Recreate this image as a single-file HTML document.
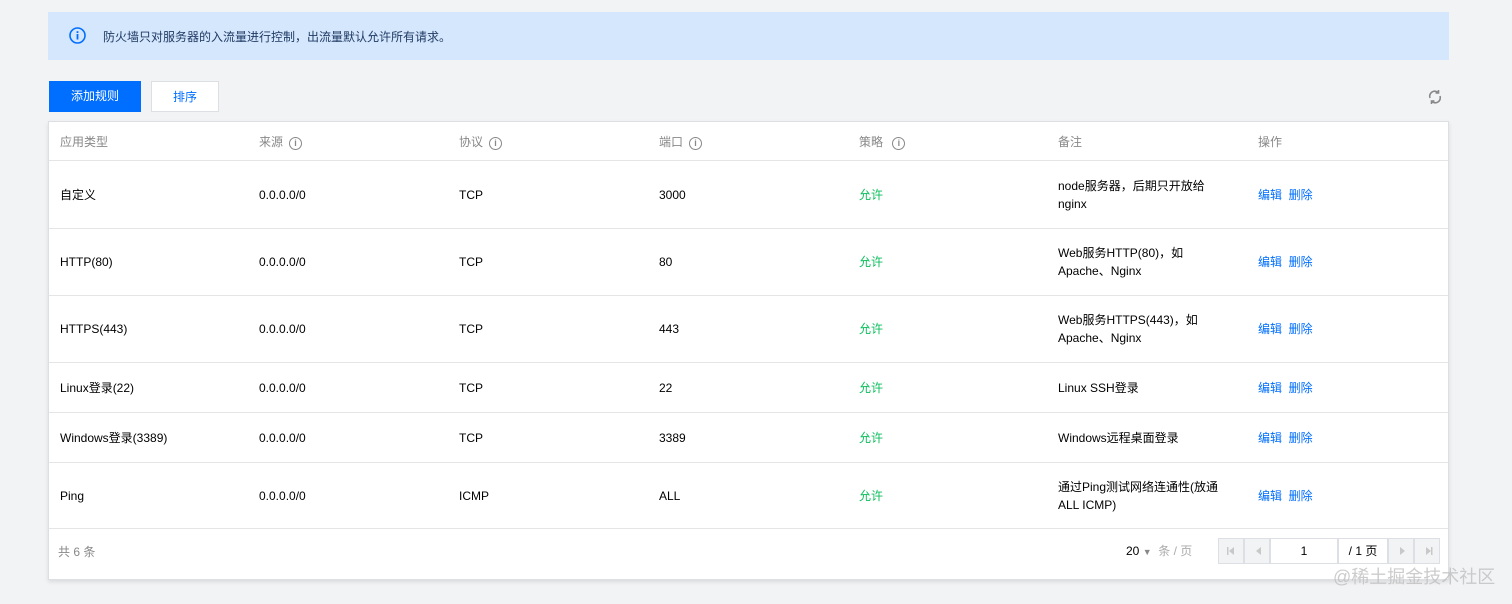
<!DOCTYPE html>
<html><head><meta charset="utf-8"><style>
*{box-sizing:border-box;margin:0;padding:0}
body{width:1512px;height:604px;background:#f2f3f5;font-family:"Liberation Sans","Noto Sans CJK SC",sans-serif;font-size:12px;color:#000;position:relative;overflow:hidden}
.alert{position:absolute;left:48px;top:12px;width:1401px;height:48px;background:#d5e7fd;color:#003b80}
.alert span{position:absolute;left:55px;top:16px;font-size:12px;color:#1f3a63}
.btn{position:absolute;top:81px;height:31px;line-height:31px;text-align:center;font-size:12px}
.tbl{position:absolute;left:48px;top:121px;width:1401px;height:459px;background:#fff;border:1px solid #dcdfe4;box-shadow:0 2px 4px rgba(0,0,0,.1)}
.row{position:absolute;left:0;width:1399px;border-bottom:1px solid #e5e5e5}
.c{position:absolute;line-height:18px}
.hd .c{color:#888}
.g{color:#0abf5b}
.b{color:#006eff}
.qi{display:inline-block;width:13px;height:13px;border:1.3px solid #888;border-radius:50%;font-size:9px;line-height:10px;text-align:center;color:#888;font-weight:bold;vertical-align:0px;margin-left:6px}
.pg{position:absolute;top:538px;height:26px;border:1px solid #dcdfe4;background:#f2f3f5}
</style></head><body>
<div class="alert">
<svg style="position:absolute;left:21px;top:15px" width="17" height="17" viewBox="0 0 17 17"><circle cx="8.5" cy="8.5" r="7.5" fill="none" stroke="#006eff" stroke-width="1.6"/><rect x="7.6" y="7" width="1.8" height="5.5" fill="#006eff"/><rect x="7.6" y="4.2" width="1.8" height="1.8" fill="#006eff"/></svg>
<span>防火墙只对服务器的入流量进行控制，出流量默认允许所有请求。</span></div>
<div class="btn" style="left:49px;width:92px;background:#006eff;color:#fff">添加规则</div>
<div class="btn" style="left:151px;width:68px;background:#fff;border:1px solid #dcdfe4;color:#006eff">排序</div>
<svg style="position:absolute;left:1427px;top:89px" width="16" height="16" viewBox="0 0 16 16" fill="none" stroke="#888" stroke-width="1.6"><path d="M3 9a5 5 0 0 1 8.5-5M13 7a5 5 0 0 1-8.5 5"/><path d="M11.5 1v3h-3M4.5 15v-3h3"/></svg>
<div class="tbl">
<div class="row hd" style="top:0;height:39px">
<div class="c" style="left:11px;top:11px">应用类型</div>
<div class="c" style="left:210px;top:11px">来源<span class="qi">i</span></div>
<div class="c" style="left:410px;top:11px">协议<span class="qi">i</span></div>
<div class="c" style="left:610px;top:11px">端口<span class="qi">i</span></div>
<div class="c" style="left:810px;top:11px">策略 <span class="qi">i</span></div>
<div class="c" style="left:1009px;top:11px">备注</div>
<div class="c" style="left:1209px;top:11px">操作</div>
</div>
<div class="row" style="top:39px;height:68px">
<div class="c" style="left:11px;top:25px">自定义</div><div class="c" style="left:210px;top:25px">0.0.0.0/0</div><div class="c" style="left:410px;top:25px">TCP</div><div class="c" style="left:610px;top:25px">3000</div><div class="c g" style="left:810px;top:25px">允许</div><div class="c" style="left:1009px;top:16px">node服务器，后期只开放给<br>nginx</div><div class="c b" style="left:1209px;top:25px">编辑&nbsp;&nbsp;删除</div></div>
<div class="row" style="top:107px;height:67px">
<div class="c" style="left:11px;top:24px">HTTP(80)</div><div class="c" style="left:210px;top:24px">0.0.0.0/0</div><div class="c" style="left:410px;top:24px">TCP</div><div class="c" style="left:610px;top:24px">80</div><div class="c g" style="left:810px;top:24px">允许</div><div class="c" style="left:1009px;top:15px">Web服务HTTP(80)，如<br>Apache、Nginx</div><div class="c b" style="left:1209px;top:24px">编辑&nbsp;&nbsp;删除</div></div>
<div class="row" style="top:174px;height:67px">
<div class="c" style="left:11px;top:24px">HTTPS(443)</div><div class="c" style="left:210px;top:24px">0.0.0.0/0</div><div class="c" style="left:410px;top:24px">TCP</div><div class="c" style="left:610px;top:24px">443</div><div class="c g" style="left:810px;top:24px">允许</div><div class="c" style="left:1009px;top:15px">Web服务HTTPS(443)，如<br>Apache、Nginx</div><div class="c b" style="left:1209px;top:24px">编辑&nbsp;&nbsp;删除</div></div>
<div class="row" style="top:241px;height:50px">
<div class="c" style="left:11px;top:16px">Linux登录(22)</div><div class="c" style="left:210px;top:16px">0.0.0.0/0</div><div class="c" style="left:410px;top:16px">TCP</div><div class="c" style="left:610px;top:16px">22</div><div class="c g" style="left:810px;top:16px">允许</div><div class="c" style="left:1009px;top:16px">Linux SSH登录</div><div class="c b" style="left:1209px;top:16px">编辑&nbsp;&nbsp;删除</div></div>
<div class="row" style="top:291px;height:50px">
<div class="c" style="left:11px;top:16px">Windows登录(3389)</div><div class="c" style="left:210px;top:16px">0.0.0.0/0</div><div class="c" style="left:410px;top:16px">TCP</div><div class="c" style="left:610px;top:16px">3389</div><div class="c g" style="left:810px;top:16px">允许</div><div class="c" style="left:1009px;top:16px">Windows远程桌面登录</div><div class="c b" style="left:1209px;top:16px">编辑&nbsp;&nbsp;删除</div></div>
<div class="row" style="top:341px;height:66px">
<div class="c" style="left:11px;top:24px">Ping</div><div class="c" style="left:210px;top:24px">0.0.0.0/0</div><div class="c" style="left:410px;top:24px">ICMP</div><div class="c" style="left:610px;top:24px">ALL</div><div class="c g" style="left:810px;top:24px">允许</div><div class="c" style="left:1009px;top:15px">通过Ping测试网络连通性(放通<br>ALL ICMP)</div><div class="c b" style="left:1209px;top:24px">编辑&nbsp;&nbsp;删除</div></div>
<div class="c" style="left:9px;top:421px;color:#888">共 6 条</div>
</div>
<div class="c" style="left:1126px;top:542px">20 <span style="color:#888;font-size:9px">▼</span> <span style="color:#aaa">&nbsp;条 / 页</span></div>
<div class="pg" style="left:1218px;width:26px"></div>
<div class="pg" style="left:1244px;width:26px"></div>
<div class="pg" style="left:1270px;width:68px;background:#fff;text-align:center;line-height:24px">1</div>
<div class="pg" style="left:1338px;width:50px;background:#fff;text-align:center;line-height:24px">/ 1 页</div>
<div class="pg" style="left:1388px;width:26px"></div>
<div class="pg" style="left:1414px;width:26px"></div>
<svg style="position:absolute;left:1226px;top:546px" width="210" height="10" viewBox="0 0 210 10" fill="#c8c8c8"><rect x="1" y="1" width="1.5" height="8"/><path d="M8 1v8L3 5z"/><path d="M35 1v8L30 5z"/><path d="M174 1v8l5-4z"/><path d="M200 1v8l5-4z"/><rect x="205" y="1" width="1.5" height="8"/></svg>
<div style="position:absolute;left:1333px;top:563px;color:#c0c0c0;font-size:18px;opacity:.8">@稀土掘金技术社区</div>
</body></html>
